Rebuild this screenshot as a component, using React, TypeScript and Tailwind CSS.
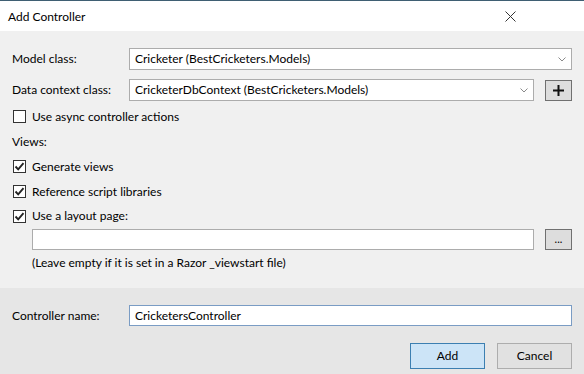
import React from "react";

function Check({ checked }: { checked: boolean }) {
  return (
    <div className="w-[13px] h-[13px] border border-[#333333] bg-white flex items-center justify-center shrink-0">
      {checked && (
        <svg width="11" height="11" viewBox="0 0 11 11">
          <path d="M1.5 5.5 L4.2 8.3 L9.5 2.2" fill="none" stroke="#222" strokeWidth="1.9" />
        </svg>
      )}
    </div>
  );
}

function Chevron() {
  return (
    <svg width="8" height="5" viewBox="0 0 8 5" className="shrink-0">
      <path d="M0.5 0.5 L4 4 L7.5 0.5" fill="none" stroke="#8a8a8a" strokeWidth="1" />
    </svg>
  );
}

export default function App() {
  return (
    <div
      className="w-[584px] h-[374px] flex flex-col text-[12px] text-black overflow-hidden"
      style={{ fontFamily: 'Lato, "Noto Sans", sans-serif' }}
    >
      <div className="h-px bg-[#3f5f73]" />
      <div className="h-[30px] bg-white flex items-center justify-between pl-[8px] pr-[68px]">
        <span className="pt-px">Add Controller</span>
        <svg width="11" height="11" viewBox="0 0 11 11">
          <path d="M0.5 0.5 L10.5 10.5 M10.5 0.5 L0.5 10.5" stroke="#333" strokeWidth="1" />
        </svg>
      </div>
      <div className="flex-1 bg-[#f0f0f0] pt-[17px] pl-[12px] pr-[12px] flex flex-col">
        <div className="h-[22px] flex items-center">
          <span className="w-[117px] shrink-0">Model class:</span>
          <div className="flex-1 h-[22px] bg-white border border-[#acacac] flex items-center pl-[5px] pr-[5px] justify-between">
            <span>Cricketer (BestCricketers.Models)</span>
            <Chevron />
          </div>
        </div>
        <div className="h-[22px] mt-[9px] flex items-center">
          <span className="w-[117px] shrink-0">Data context class:</span>
          <div className="w-[405px] h-[22px] bg-white border border-[#acacac] flex items-center pl-[5px] pr-[5px] justify-between">
            <span>CricketerDbContext (BestCricketers.Models)</span>
            <Chevron />
          </div>
          <div className="ml-[11px] w-[27px] h-[21px] bg-[#dddddd] border border-[#707070] flex items-center justify-center">
            <svg width="11" height="11" viewBox="0 0 11 11">
              <path d="M5.5 0 V11 M0 5.5 H11" stroke="#111" strokeWidth="2" />
            </svg>
          </div>
        </div>
        <div className="mt-[3px] h-[25px] flex items-center pl-[1px]">
          <Check checked={false} />
          <span className="ml-[6px]">Use async controller actions</span>
        </div>
        <div className="h-[25px] flex items-center">
          <span>Views:</span>
        </div>
        <div className="h-[25px] flex items-center pl-[1px]">
          <Check checked={true} />
          <span className="ml-[6px]">Generate views</span>
        </div>
        <div className="h-[25px] flex items-center pl-[1px]">
          <Check checked={true} />
          <span className="ml-[6px]">Reference script libraries</span>
        </div>
        <div className="h-[24px] flex items-center pl-[1px]">
          <Check checked={true} />
          <span className="ml-[6px]">Use a layout page:</span>
        </div>
        <div className="mt-[1px] h-[21px] flex items-center pl-[20px]">
          <div className="w-[502px] h-[21px] bg-white border border-[#acacac]" />
          <div className="ml-[11px] w-[27px] h-[21px] bg-[#dddddd] border border-[#707070] flex items-center justify-center text-[11px] leading-none pb-[2px]">
            ...
          </div>
        </div>
        <div className="h-[25px] flex items-center pl-[20px]">
          <span>(Leave empty if it is set in a Razor _viewstart file)</span>
        </div>
      </div>
      <div className="h-[86px] bg-[#e6e6e6] pt-[17px] pl-[12px] pr-[12px] flex flex-col">
        <div className="h-[21px] flex items-center">
          <span className="w-[117px] shrink-0">Controller name:</span>
          <div className="flex-1 h-[21px] bg-white border border-[#7a9cc4] flex items-center pl-[5px]">
            <span>CricketersController</span>
          </div>
        </div>
        <div className="mt-[17px] flex justify-end gap-[12px]">
          <div className="w-[75px] h-[26px] bg-[#cce4f7] border border-[#3c7fb1] flex items-center justify-center">
            Add
          </div>
          <div className="w-[75px] h-[26px] bg-[#e1e1e1] border border-[#adadad] flex items-center justify-center">
            Cancel
          </div>
        </div>
      </div>
    </div>
  );
}
